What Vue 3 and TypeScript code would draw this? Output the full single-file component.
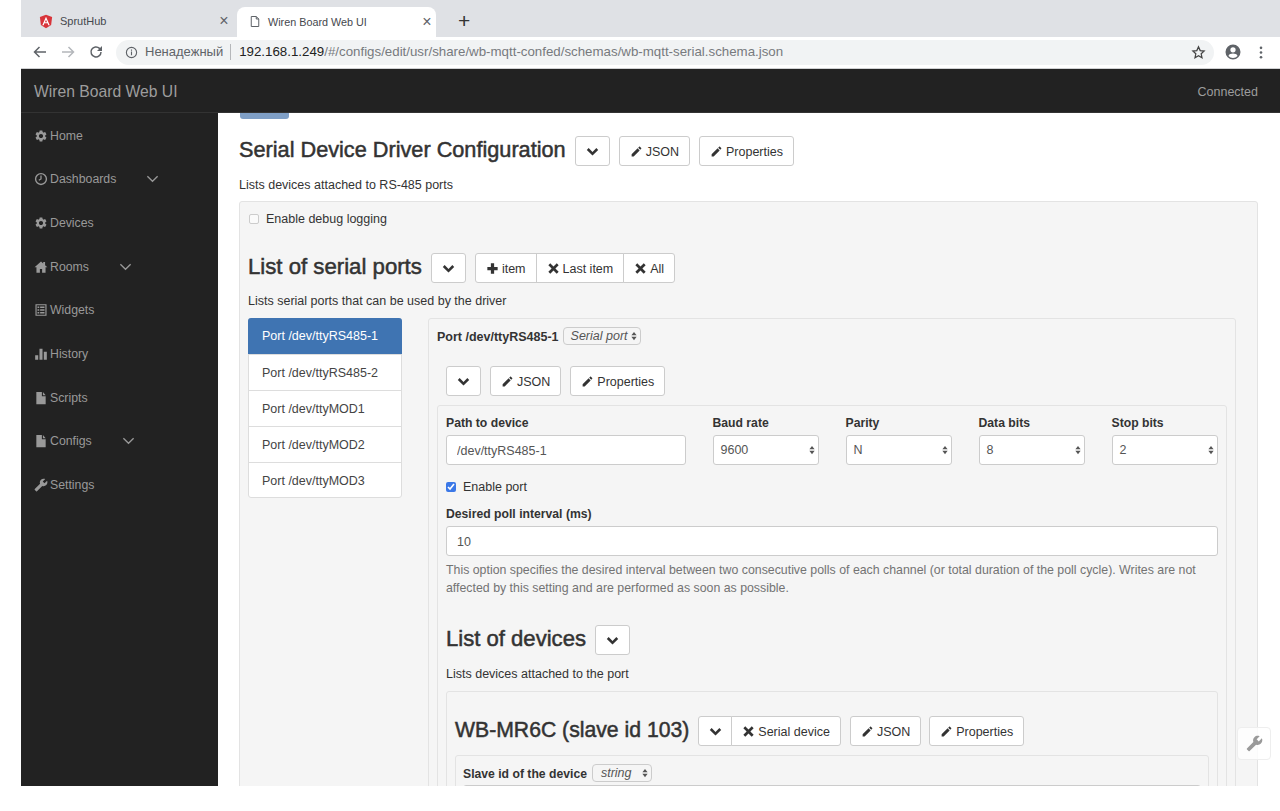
<script setup lang="ts">
const icons: Record<string, string> = {
  cog: 'M19.14 12.94c.04-.3.06-.61.06-.94 0-.32-.02-.64-.07-.94l2.03-1.58c.18-.14.23-.41.12-.61l-1.92-3.32c-.12-.22-.37-.29-.59-.22l-2.39.96c-.5-.38-1.03-.7-1.62-.94l-.36-2.54c-.04-.24-.24-.41-.48-.41h-3.84c-.24 0-.43.17-.47.41l-.36 2.54c-.59.24-1.13.57-1.62.94l-2.39-.96c-.22-.08-.47 0-.59.22L2.74 8.87c-.12.21-.08.47.12.61l2.03 1.58c-.05.3-.09.63-.09.94s.02.64.07.94l-2.03 1.58c-.18.14-.23.41-.12.61l1.92 3.32c.12.22.37.29.59.22l2.39-.96c.5.38 1.03.7 1.62.94l.36 2.54c.05.24.24.41.48.41h3.84c.24 0 .44-.17.47-.41l.36-2.54c.59-.24 1.13-.56 1.62-.94l2.39.96c.22.08.47 0 .59-.22l1.92-3.32c.12-.22.07-.47-.12-.61l-2.01-1.58zM12 15.6c-1.98 0-3.6-1.62-3.6-3.6s1.62-3.6 3.6-3.6 3.6 1.62 3.6 3.6-1.62 3.6-3.6 3.6z',
  clock: 'M12 1.5a10.5 10.5 0 1 0 0 21 10.5 10.5 0 0 0 0-21zm0 18.6a8.1 8.1 0 1 1 0-16.2 8.1 8.1 0 0 1 0 16.2zM10.9 6h2.2v6.6l-4.3 2.5-1.1-1.9 3.2-1.8z',
  home: 'M12 2.5 1 12.5h3.2V22h5.9v-6.5h3.8V22h5.9v-9.5H23l-4-3.6V3.5h-3.2v2.5z',
  list: 'M2.5 2h19v20h-19zM4.5 4v16h15V4zM6 6h3v2.5H6zM10.5 6H18v2.5h-7.5zM6 10.7h3v2.5H6zM10.5 10.7H18v2.5h-7.5zM6 15.4h3v2.5H6zM10.5 15.4H18v2.5h-7.5z',
  stats: 'M2 14h5.2v8H2zM9.4 3h5.2v19H9.4zM16.8 8h5.2v14h-5.2z',
  file: 'M4 1.5h9.5V9H20v13.5H4zM15.3 1.5 20 7.2h-4.7z',
  wrench: 'M22.7 19l-9.1-9.1c.9-2.3.4-5-1.5-6.9-2-2-5-2.4-7.4-1.3L9 6 6 9 1.6 4.7C.4 7.1.9 10.1 2.9 12.1c1.9 1.9 4.6 2.4 6.9 1.5l9.1 9.1c.4.4 1 .4 1.4 0l2.3-2.3c.5-.4.5-1.1.1-1.4z',
  pencil: 'M3 17.25V21h3.75L17.81 9.94l-3.75-3.75L3 17.25zM20.71 7.04c.39-.39.39-1.02 0-1.41l-2.34-2.34c-.39-.39-1.02-.39-1.41 0l-1.83 1.83 3.75 3.75 1.83-1.83z',
  plus: 'M9 2.5h6V9h6.5v6H15v6.5H9V15H2.5V9H9z',
  remove: 'M6 2.5 12 8.5 18 2.5 21.5 6 15.5 12 21.5 18 18 21.5 12 15.5 6 21.5 2.5 18 8.5 12 2.5 6z',
  chevron: 'M12 19.5 1.5 9l3.4-3.4 7.1 7.1 7.1-7.1L22.500 9z',
}

const nav = [
  { label: 'Home', icon: 'cog', sub: false },
  { label: 'Dashboards', icon: 'clock', sub: true },
  { label: 'Devices', icon: 'cog', sub: false },
  { label: 'Rooms', icon: 'home', sub: true },
  { label: 'Widgets', icon: 'list', sub: false },
  { label: 'History', icon: 'stats', sub: false },
  { label: 'Scripts', icon: 'file', sub: false },
  { label: 'Configs', icon: 'file', sub: true },
  { label: 'Settings', icon: 'wrench', sub: false },
]

const ports = ['Port /dev/ttyRS485-1', 'Port /dev/ttyRS485-2', 'Port /dev/ttyMOD1', 'Port /dev/ttyMOD2', 'Port /dev/ttyMOD3']
const selects = [
  { label: 'Baud rate', value: '9600' },
  { label: 'Parity', value: 'N' },
  { label: 'Data bits', value: '8' },
  { label: 'Stop bits', value: '2' },
]
</script>

<template>
  <div class="frame">
    <div class="tabbar">
      <div class="tab">
        <svg class="ng" viewBox="0 0 24 24"><path fill="#d8343a" d="M12 .5 1.500 4.200l1.700 14L12 23.500l8.800-5.300 1.700-14z" /><path fill="#fff" d="M12 4 5.600 18.300H8l1.300-3.200h5.400l1.300 3.200h2.400zm-1.800 9.100L12 8.800l1.800 4.300z" /></svg>
        <span class="tab-title">SprutHub</span>
        <span class="tab-x">×</span>
      </div>
      <div class="tab active">
        <svg class="doc" viewBox="0 0 12 14"><path fill="none" stroke="#5f6368" stroke-width="1.200" d="M1.500 1h6l3 3v9h-9zM7.500 1v3h3" /></svg>
        <span class="tab-title">Wiren Board Web UI</span>
        <span class="tab-x">×</span>
      </div>
      <span class="newtab">+</span>
    </div>

    <div class="addressbar">
      <svg class="tool" viewBox="0 0 16 16"><path fill="none" stroke="#5f6368" stroke-width="1.500" d="M14 8H2.500M7.500 3l-5 5 5 5" /></svg>
      <svg class="tool" viewBox="0 0 16 16"><path fill="none" stroke="#b4b7bb" stroke-width="1.500" d="M2 8h11.500M8.500 3l5 5-5 5" /></svg>
      <svg class="tool" viewBox="0 0 16 16"><path fill="none" stroke="#5f6368" stroke-width="1.500" d="M13 8a5 5 0 1 1-1.500-3.600L13 6" /><path fill="#5f6368" d="M14 2v5H9z" /></svg>
      <div class="omnibox">
        <svg class="info" viewBox="0 0 14 14"><circle cx="7" cy="7" r="5.500" fill="none" stroke="#5f6368" stroke-width="1.200" /><path fill="#5f6368" d="M6.400 6h1.200v4H6.400zM6.400 3.800h1.200V5H6.400z" /></svg>
        <span class="insecure">Ненадежный</span>
        <span class="sep"></span>
        <span class="url"><b>192.168.1.249</b>/#/configs/edit/usr/share/wb-mqtt-confed/schemas/wb-mqtt-serial.schema.json</span>
        <svg class="star" viewBox="0 0 24 24"><path fill="none" stroke="#444" stroke-width="2" d="m12 3 2.700 6 6.300.7-4.700 4.300 1.300 6.500L12 17.200 6.400 20.500 7.700 14 3 9.700 9.300 9z" /></svg>
      </div>
      <svg class="avatar" viewBox="0 0 24 24"><path fill="#5f6368" d="M12 2a10 10 0 1 0 0 20 10 10 0 0 0 0-20zm0 3.500a3.500 3.500 0 1 1 0 7 3.500 3.500 0 0 1 0-7zm0 14.500a8 8 0 0 1-6-2.800c.1-2 4-3.100 6-3.100s5.900 1.100 6 3.100a8 8 0 0 1-6 2.800z" /></svg>
      <svg class="dots" viewBox="0 0 4 16"><circle cx="2" cy="3" r="1.400" fill="#5f6368" /><circle cx="2" cy="8" r="1.400" fill="#5f6368" /><circle cx="2" cy="13" r="1.400" fill="#5f6368" /></svg>
    </div>

    <header class="navbar">
      <span class="brand">Wiren Board Web UI</span>
      <span class="conn">Connected</span>
    </header>

    <div class="body">
      <aside class="sidebar">
        <div v-for="n in nav" :key="n.label" class="nav-item">
          <svg class="nav-icon" :class="{ flip: n.icon === 'wrench' }" viewBox="0 0 24 24"><path :d="icons[n.icon]" fill-rule="evenodd" /></svg>
          <span>{{ n.label }}</span>
          <svg v-if="n.sub" class="nav-chev" viewBox="0 0 14 8"><path fill="none" stroke="#999" stroke-width="1.400" d="M1.500 1 7 6.500 12.500 1" /></svg>
        </div>
      </aside>

      <main class="main">
        <div class="save-stub"></div>

        <div class="title-row first">
          <h2>Serial Device Driver Configuration</h2>
          <button class="btn"><svg class="ic chev" viewBox="0 0 24 24"><path :d="icons.chevron" /></svg></button>
          <button class="btn"><svg class="ic" viewBox="0 0 24 24"><path :d="icons.pencil" /></svg>JSON</button>
          <button class="btn"><svg class="ic" viewBox="0 0 24 24"><path :d="icons.pencil" /></svg>Properties</button>
        </div>
        <p class="desc top">Lists devices attached to RS-485 ports</p>

        <section class="well root">
          <label class="check"><input class="blank" type="checkbox" />Enable debug logging</label>

          <div class="title-row ports">
            <h2>List of serial ports</h2>
            <button class="btn"><svg class="ic chev" viewBox="0 0 24 24"><path :d="icons.chevron" /></svg></button>
            <div class="group">
              <button class="btn"><svg class="ic" viewBox="0 0 24 24"><path :d="icons.plus" /></svg>item</button>
              <button class="btn"><svg class="ic" viewBox="0 0 24 24"><path :d="icons.remove" /></svg>Last item</button>
              <button class="btn"><svg class="ic" viewBox="0 0 24 24"><path :d="icons.remove" /></svg>All</button>
            </div>
          </div>
          <p class="desc">Lists serial ports that can be used by the driver</p>

          <div class="split">
            <ul class="port-list">
              <li v-for="(p, i) in ports" :key="p" :class="{ on: i === 0 }">{{ p }}</li>
            </ul>

            <section class="well panel">
              <div class="panel-head">
                <b>Port /dev/ttyRS485-1</b>
                <span class="mini-select">Serial port
                  <svg class="updown" viewBox="0 0 8 12"><path d="M4 .5 7.500 5h-7zM4 11.500.5 7h7z" /></svg>
                </span>
              </div>

              <div class="title-row tools">
                <button class="btn"><svg class="ic chev" viewBox="0 0 24 24"><path :d="icons.chevron" /></svg></button>
                <button class="btn"><svg class="ic" viewBox="0 0 24 24"><path :d="icons.pencil" /></svg>JSON</button>
                <button class="btn"><svg class="ic" viewBox="0 0 24 24"><path :d="icons.pencil" /></svg>Properties</button>
              </div>

              <section class="well form">
                <div class="fields">
                  <div class="field">
                    <label>Path to device</label>
                    <input class="control" value="/dev/ttyRS485-1" readonly />
                  </div>
                  <div v-for="s in selects" :key="s.label" class="field">
                    <label>{{ s.label }}</label>
                    <div class="control select">{{ s.value }}
                      <svg class="updown" viewBox="0 0 8 12"><path d="M4 .5 7.500 5h-7zM4 11.500.5 7h7z" /></svg>
                    </div>
                  </div>
                </div>

                <label class="check enable"><input type="checkbox" checked />Enable port</label>

                <div class="field poll">
                  <label>Desired poll interval (ms)</label>
                  <input class="control" value="10" readonly />
                  <p class="help">This option specifies the desired interval between two consecutive polls of each channel (or total duration of the poll cycle). Writes are not affected by this setting and are performed as soon as possible.</p>
                </div>

                <div class="title-row devices">
                  <h2>List of devices</h2>
                  <button class="btn"><svg class="ic chev" viewBox="0 0 24 24"><path :d="icons.chevron" /></svg></button>
                </div>
                <p class="desc tail">Lists devices attached to the port</p>

                <section class="well device">
                  <div class="title-row device-head">
                    <h2>WB-MR6C (slave id 103)</h2>
                    <div class="group">
                      <button class="btn"><svg class="ic chev" viewBox="0 0 24 24"><path :d="icons.chevron" /></svg></button>
                      <button class="btn"><svg class="ic" viewBox="0 0 24 24"><path :d="icons.remove" /></svg>Serial device</button>
                    </div>
                    <button class="btn"><svg class="ic" viewBox="0 0 24 24"><path :d="icons.pencil" /></svg>JSON</button>
                    <button class="btn"><svg class="ic" viewBox="0 0 24 24"><path :d="icons.pencil" /></svg>Properties</button>
                  </div>
                  <section class="well slave">
                    <div class="panel-head slave-head">
                      <b>Slave id of the device</b>
                      <span class="mini-select">string
                        <svg class="updown" viewBox="0 0 8 12"><path d="M4 .5 7.500 5h-7zM4 11.500.5 7h7z" /></svg>
                      </span>
                    </div>
                    <input class="control" readonly />
                  </section>
                </section>
              </section>
            </section>
          </div>
        </section>
      </main>
    </div>

    <div class="float-tool">
      <svg class="flip" viewBox="0 0 24 24"><path :d="icons.wrench" fill="#9a9a9a" /></svg>
    </div>
  </div>
</template>

<style>
html, body { margin: 0; background: #fff; }
</style>

<style scoped>
* { box-sizing: border-box; }
.frame {
  position: relative;
  height: 786px;
  margin-left: 21px;
  display: flex;
  flex-direction: column;
  overflow: hidden;
  font: 12.500px/18px "Liberation Sans", Arial, sans-serif;
  color: #333;
  background: #fff;
}

.tabbar { flex: none; height: 37px; background: #dfe1e5; display: flex; align-items: flex-end; padding-left: 8px; }
.tab { width: 208px; height: 30px; display: flex; align-items: center; padding: 0 5px 2px 10px; font-size: 11px; color: #45484d; }
.tab.active { width: 199px; background: #fff; border-radius: 8px 8px 0 0; padding: 0 1px 1px 13px; font-size: 10.800px; }
.tab-title { flex: 1; margin-left: 7px; }
.tab.active .tab-title { margin-left: 8px; }
.tab-x { font-size: 16px; color: #5f6368; width: 16px; text-align: center; }
.ng { width: 14px; height: 15px; }
.doc { width: 10px; height: 13px; }
.newtab { margin: 0 0 3px 22px; font-size: 21px; line-height: 26px; color: #333; }

.addressbar { flex: none; height: 32px; display: flex; align-items: center; padding: 0 12px 1px 11px; border-bottom: 1px solid #d0d1d3; background: #fff; }
.tool { width: 16px; height: 16px; margin-right: 12px; }
.omnibox { width: 1098px; height: 25px; border-radius: 13px; background: #f1f3f4; display: flex; align-items: center; padding: 0 8px 0 9px; font-size: 13px; }
.info { width: 13px; height: 13px; }
.insecure { margin-left: 7px; color: #5f6368; }
.sep { width: 1px; height: 16px; background: #b5b7ba; margin: 0 8px 0 7px; }
.url { flex: 1; color: #777a7e; white-space: nowrap; font-size: 13.300px; }
.url b { font-weight: 400; color: #222; }
.star { width: 15px; height: 15px; }
.avatar { width: 18px; height: 18px; margin-left: 10px; }
.dots { width: 4px; height: 15px; margin-left: 17px; }

.navbar { flex: none; height: 44px; background: #222; border-bottom: 1px solid #333; display: flex; align-items: center; justify-content: space-between; padding: 2px 22px 0 13px; color: #9d9d9d; }
.brand { font-size: 15.700px; }
.conn { font-size: 12.500px; }

.body { flex: 1; min-height: 0; display: flex; }
.sidebar { flex: none; width: 197px; background: #222; color: #999; padding-top: 1px; font-size: 12.300px; }
.nav-item { height: 43.650px; display: flex; align-items: center; padding-left: 13px; }
.nav-icon { width: 14px; height: 14px; fill: #999; margin-right: 2px; }
.flip { transform: scaleX(-1); }
.nav-chev { width: 13px; height: 8px; margin-left: 30px; }

.main { flex: 1; min-width: 0; padding: 0 22px 0 21px; overflow: hidden; }
.save-stub { width: 49px; height: 6px; margin-left: 1px; background: #7f9fc6; border-radius: 0 0 3px 3px; }

h2 { margin: 0; padding-bottom: 2px; font-size: 21.700px; font-weight: 400; line-height: 28px; color: #333; -webkit-text-stroke: .5px #333; white-space: nowrap; }
.title-row { display: flex; align-items: center; gap: 9px; height: 30px; }
.title-row.first { margin-top: 17px; }
.title-row.ports { margin-top: 25px; }
.title-row.ports h2 { font-size: 22.200px; }
.title-row.tools { margin: 21px 0 0 9px; }
.title-row.devices { margin-top: 29px; }
.title-row.devices h2 { font-size: 22.100px; }
.title-row.device-head { margin-top: 0; }
.title-row.device-head h2 { font-size: 21.200px; }
.title-row.device-head .group .btn:first-child { padding: 0 9.500px; }
.title-row.device-head > .btn:last-child { margin-left: -1px; }

.desc { margin: 9px 0 0; }
.desc.top { margin-top: 10px; }
.desc.tail { padding-top: 1px; height: 18px; }

.btn { height: 30px; padding: 1px 10px 0; display: inline-flex; align-items: center; gap: 3px; background: #fff; border: 1px solid #ccc; border-radius: 3px; font: inherit; color: #333; }
.ic { width: 13px; height: 13px; fill: #333; }
.group { display: flex; }
.group .btn { border-radius: 0; margin-left: -1px; }
.group .btn:first-child { border-radius: 3px 0 0 3px; margin-left: 0; }
.group .btn:last-child { border-radius: 0 3px 3px 0; }

.well { background: #f5f5f5; border: 1px solid #e3e3e3; border-radius: 3px; }
.well.root { margin-top: 7px; padding: 8px 8px 40px; }
.check { display: flex; align-items: center; gap: 7px; height: 18px; }
.check input { width: 10px; height: 10px; margin: 0; accent-color: #3b78e7; }
.check input.blank { appearance: none; margin-left: 1px; background: #fafafa; border: 1px solid #ccc; border-radius: 2px; }

.split { display: flex; align-items: flex-start; gap: 26px; margin: 8px 13px 0 0; }
.port-list { flex: none; width: 154px; margin: 0; padding: 0; list-style: none; background: #fff; border: 1px solid #ddd; border-radius: 3px; }
.port-list li { height: 36px; line-height: 37px; padding-left: 13px; border-top: 1px solid #ddd; color: #444; }
.port-list li:last-child { height: 35px; }
.port-list li.on { margin: -1px -1px 0; padding-left: 14px; height: 36px; line-height: 37px; border-top: 0; background: #3f74b2; color: #fff; border-radius: 3px 3px 0 0; }

.well.panel { flex: 1; min-width: 0; padding: 8px 8px 40px; }
.panel-head { display: flex; align-items: center; gap: 4px; height: 18px; }
.panel-head b { padding-top: 1px; }
.mini-select { position: relative; height: 18px; padding: 0 12px 0 7px; border: 1px solid #ccc; border-radius: 4px; background: #f5f5f5; font-style: italic; line-height: 16px; color: #555; }
.updown { width: 6px; height: 10px; fill: #555; position: absolute; right: 3px; top: 50%; margin-top: -5px; }

.well.form { margin-top: 9px; padding: 7px 8px 40px; }
.fields { display: grid; grid-template-columns: 240px repeat(4, 1fr); column-gap: 26.500px; }
.field label { display: block; font-weight: 700; font-size: 12.200px; height: 18px; line-height: 20px; }
.control { display: block; width: 100%; height: 30px; margin-top: 4px; padding: 1px 10px 0; background: #fff; border: 1px solid #ccc; border-radius: 3px; font: inherit; color: #555; outline: 0; }
.select { position: relative; line-height: 28px; padding: 0 7px; }
.check.enable { margin-top: 13px; }
.poll { margin-top: 8px; }
.help { margin: 4px 0 0; padding-top: 1px; height: 37px; margin-bottom: -1px; color: #737373; font-size: 12.350px; }

.well.device { margin-top: 9px; padding: 24px 8px 40px; }
.well.slave { margin-top: 9px; padding: 8px 7px 40px; }
.slave-head { gap: 5px; }
.slave-head b { font-size: 12.200px; }
.slave .mini-select { padding: 0 19px 0 8px; }
.slave .control { margin-top: 3px; }

.float-tool { position: absolute; left: 1216px; top: 727px; width: 34px; height: 33px; display: flex; align-items: center; justify-content: center; background: rgba(255, 255, 255, .8); border: 1px solid #eee; border-radius: 4px; }
.float-tool svg { width: 17px; height: 17px; }
</style>
